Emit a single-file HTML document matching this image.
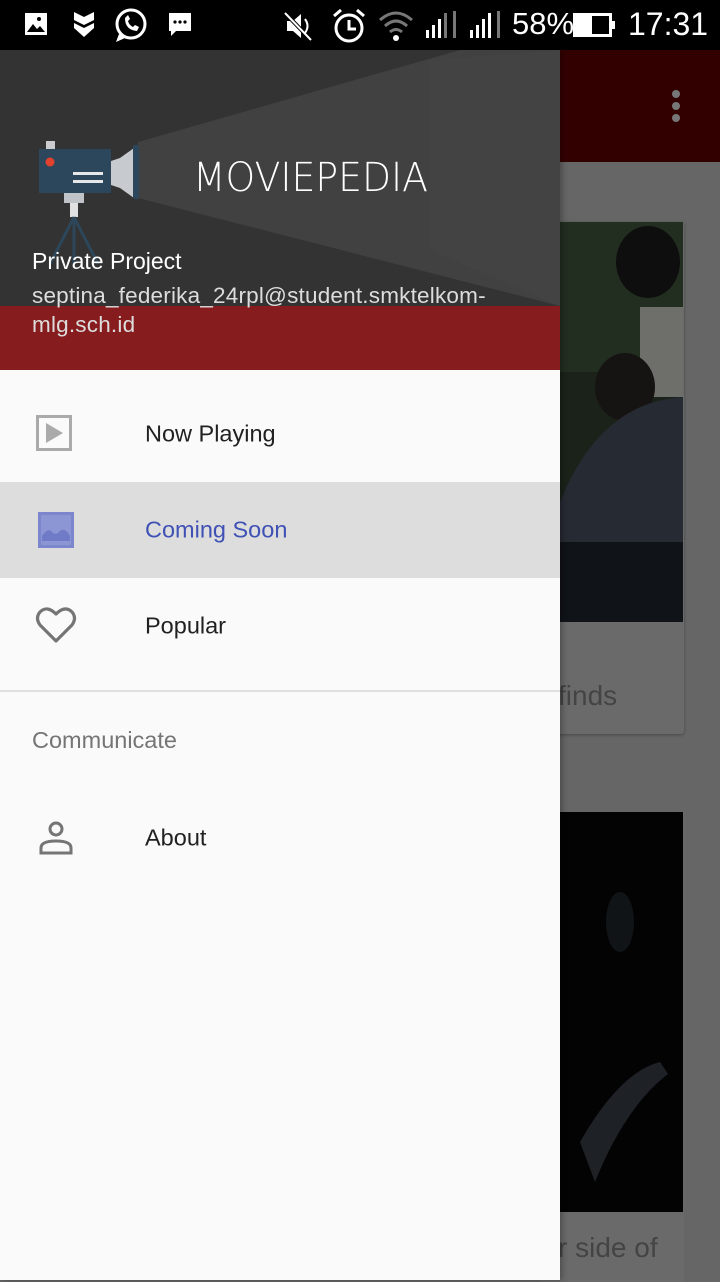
<!DOCTYPE html>
<html><head><meta charset="utf-8"><style>
*{margin:0;padding:0;box-sizing:border-box}
body{width:720px;height:1280px;overflow:hidden;position:relative;background:#666;font-family:"Liberation Sans",Roboto,sans-serif}
.abs{position:absolute}
.status{left:0;top:0;width:720px;height:50px;background:#000;color:#fff}
.item{position:absolute;left:0;width:560px;height:96px}
.item .t{position:absolute;left:145px;top:50%;transform:translateY(-50%);font-size:23.5px;color:#212121}
</style></head><body>
<!-- background app -->
<div class="abs" style="left:560px;top:50px;width:160px;height:112px;background:#330000"></div>
<div class="abs" style="left:672px;top:90px;width:8px;height:8px;border-radius:4px;background:#777"></div>
<div class="abs" style="left:672px;top:102px;width:8px;height:8px;border-radius:4px;background:#777"></div>
<div class="abs" style="left:672px;top:114px;width:8px;height:8px;border-radius:4px;background:#777"></div>
<div class="abs" style="left:540px;top:222px;width:144px;height:512px;background:#6a6a6a;box-shadow:0 1px 3px rgba(0,0,0,.3);border-radius:3px"></div>
<svg class="abs" style="left:540px;top:222px" width="143" height="400">
<rect width="143" height="400" fill="#1a2219"/>
<rect x="0" y="0" width="143" height="150" fill="#222e20"/>
<ellipse cx="108" cy="40" rx="32" ry="36" fill="#0e0e0e"/>
<rect x="100" y="85" width="43" height="90" fill="#6e6e6a"/>
<ellipse cx="85" cy="165" rx="30" ry="34" fill="#161412"/>
<path d="M20 280 Q60 180 143 175 L143 400 L20 400Z" fill="#262a32"/>
<rect x="0" y="320" width="143" height="80" fill="#101318"/>
</svg>
<div class="abs" style="left:558px;top:680px;font-size:28px;color:#444">finds</div>
<div class="abs" style="left:540px;top:812px;width:144px;height:470px;background:#6a6a6a;border-radius:3px"></div>
<svg class="abs" style="left:540px;top:812px" width="143" height="400">
<rect width="143" height="400" fill="#030304"/>
<path d="M40 330 Q80 260 120 250 L128 262 Q85 295 55 370Z" fill="#1e2226"/>
<ellipse cx="80" cy="110" rx="14" ry="30" fill="#111416"/>
</svg>
<div class="abs" style="left:558px;top:1232px;font-size:28px;color:#444">r side of</div>
<!-- status bar -->
<div class="abs status">
<svg class="abs" style="left:24px;top:12px" width="24" height="24"><rect x="1" y="1" width="22" height="22" fill="#fff"/><path d="M3 20 L9 12 L13 17 L16 14 L21 20Z" fill="#000"/><circle cx="15" cy="7" r="2" fill="#000"/></svg>
<svg class="abs" style="left:72px;top:10px" width="24" height="28"><path d="M2 2 L12 7 L22 2 L22 10 L12 15 L2 10Z M2 13 L12 18 L22 13 L22 18 L12 27 L2 18Z" fill="#fff"/></svg>
<svg class="abs" style="left:113px;top:6px" width="36" height="38"><circle cx="18" cy="18" r="14" fill="none" stroke="#fff" stroke-width="3"/><path d="M6 28 L3 36 L12 32" fill="#fff"/><path d="M12 12 Q12 24 24 25 L26 21 L22 19 L20 21 Q16 19 15 15 L17 13 L15 9Z" fill="#fff"/></svg>
<svg class="abs" style="left:168px;top:12px" width="24" height="26"><path d="M1 1 H23 V19 H8 L3 24 V19 H1Z" fill="#fff"/><circle cx="7" cy="10" r="1.6" fill="#000"/><circle cx="12" cy="10" r="1.6" fill="#000"/><circle cx="17" cy="10" r="1.6" fill="#000"/></svg>
<svg class="abs" style="left:283px;top:10px" width="30" height="32"><path d="M4 11 H10 L18 4 V28 L10 21 H4Z" fill="#fff"/><path d="M2 3 L28 30" stroke="#000" stroke-width="4"/><path d="M2 3 L28 30" stroke="#fff" stroke-width="2"/><path d="M22 9 Q27 16 22 23" stroke="#fff" stroke-width="2" fill="none"/></svg>
<svg class="abs" style="left:332px;top:8px" width="34" height="36"><circle cx="17" cy="20" r="13" fill="none" stroke="#fff" stroke-width="3"/><path d="M17 12 V21 H24" stroke="#fff" stroke-width="3" fill="none"/><path d="M2 8 L9 2 M32 8 L25 2" stroke="#fff" stroke-width="3"/></svg>
<svg class="abs" style="left:378px;top:10px" width="36" height="32"><path d="M2 10 Q18 -4 34 10" stroke="#777" stroke-width="3" fill="none"/><path d="M7 16 Q18 6 29 16" stroke="#777" stroke-width="3" fill="none"/><path d="M12 22 Q18 17 24 22" stroke="#777" stroke-width="3" fill="none"/><circle cx="18" cy="28" r="3" fill="#fff"/></svg>
<svg class="abs" style="left:425px;top:10px" width="36" height="30"><rect x="1" y="20" width="3" height="8" fill="#fff"/><rect x="7" y="15" width="3" height="13" fill="#fff"/><rect x="13" y="9" width="3" height="19" fill="#fff"/><rect x="19" y="3" width="3" height="25" fill="#777"/><rect x="28" y="1" width="3" height="27" fill="#777"/></svg>
<svg class="abs" style="left:469px;top:10px" width="36" height="30"><rect x="1" y="20" width="3" height="8" fill="#fff"/><rect x="7" y="15" width="3" height="13" fill="#fff"/><rect x="13" y="9" width="3" height="19" fill="#fff"/><rect x="19" y="3" width="3" height="25" fill="#fff"/><rect x="28" y="1" width="3" height="27" fill="#777"/></svg>
<div class="abs" style="left:512px;top:6px;font-size:31px;color:#fff">58%</div>
<svg class="abs" style="left:573px;top:13px" width="44" height="24"><rect x="1.5" y="1.5" width="36" height="21" fill="none" stroke="#fff" stroke-width="3"/><rect x="3" y="3" width="16" height="18" fill="#fff"/><rect x="38" y="8" width="4" height="8" fill="#fff"/></svg>
<div class="abs" style="left:628px;top:6px;font-size:32px;color:#fff">17:31</div>
</div>
<!-- drawer -->
<div class="abs" style="left:0;top:50px;width:560px;height:1230px;background:#fafafa;box-shadow:2px 0 6px rgba(0,0,0,.3)"></div>
<svg class="abs" style="left:0;top:50px" width="560" height="320">
<rect width="560" height="320" fill="#333"/>
<polygon points="138,92 460,0 560,0 560,256 138,148" fill="#414141"/>
<polygon points="430,10 560,0 560,256 430,200" fill="#444" opacity=".6"/>
<rect y="256" width="560" height="64" fill="#861c1e"/>
<rect x="46" y="91" width="9" height="9" fill="#c9cbce"/>
<rect x="39" y="99" width="72" height="44" fill="#2c475b"/>
<circle cx="50" cy="112" r="4.5" fill="#e2412e"/>
<rect x="73" y="122" width="30" height="3" fill="#e6e7e9"/>
<rect x="73" y="130" width="30" height="3" fill="#e6e7e9"/>
<polygon points="111,111 120,108 134,98 134,148 120,138 111,135" fill="#c7cacf"/>
<rect x="133" y="95" width="6" height="54" rx="2" fill="#2c475b"/>
<rect x="64" y="143" width="20" height="10" fill="#c0c3c7"/>
<rect x="70" y="153" width="8" height="14" fill="#dfe1e3"/>
<path d="M74 167 L50 214 M74 167 L74 214 M74 167 L98 214" stroke="#2c475b" stroke-width="3"/>
<text x="193" y="141" font-family="DejaVu Sans, Liberation Sans, sans-serif" font-size="40" fill="#fff" textLength="235" lengthAdjust="spacingAndGlyphs" style="font-weight:lighter">MOVIEPEDIA</text>
</svg>
<div class="abs" style="left:32px;top:248px;font-size:23px;color:#fff">Private Project</div>
<div class="abs" style="left:32px;top:281px;font-size:22.5px;color:#ddd;line-height:29px;width:520px;letter-spacing:0.2px">septina_federika_24rpl@student.smktelkom-<br>mlg.sch.id</div>
<div class="item" style="top:386px">
<svg class="abs" style="left:36px;top:29px" width="38" height="38"><rect x="1.5" y="1.5" width="33" height="33" fill="none" stroke="#aaa" stroke-width="3"/><polygon points="10,8 27,18 10,28" fill="#aaa"/></svg>
<div class="t">Now Playing</div></div>
<div class="item" style="top:482px;background:#ddd">
<svg class="abs" style="left:38px;top:30px" width="38" height="38"><rect x="1.5" y="1.5" width="33" height="33" fill="none" stroke="#7b86cc" stroke-width="3"/><rect x="3" y="3" width="30" height="30" fill="#8d96d4"/><path d="M4 29 L4 24 Q10 15 14 20 Q18 24 22 19 Q27 15 32 24 L32 29Z" fill="#6f7bc6"/></svg>
<div class="t" style="color:#3f51b5">Coming Soon</div></div>
<div class="item" style="top:578px">
<svg class="abs" style="left:35px;top:27px" width="42" height="40"><path d="M21 36 L5 20 Q0 13 5 7 Q12 0 21 9 Q30 0 37 7 Q42 13 37 20Z" fill="none" stroke="#757575" stroke-width="3.2" stroke-linejoin="round"/></svg>
<div class="t">Popular</div></div>
<div class="abs" style="left:0;top:690px;width:560px;height:2px;background:#e0e0e0"></div>
<div class="abs" style="left:32px;top:727px;font-size:23.5px;color:#757575">Communicate</div>
<div class="item" style="top:790px">
<svg class="abs" style="left:38px;top:30px" width="36" height="36"><circle cx="18" cy="9" r="6" fill="none" stroke="#757575" stroke-width="3"/><path d="M3 33 V28 Q3 21 18 21 Q33 21 33 28 V33Z" fill="none" stroke="#757575" stroke-width="3"/></svg>
<div class="t">About</div></div>
</body></html>
